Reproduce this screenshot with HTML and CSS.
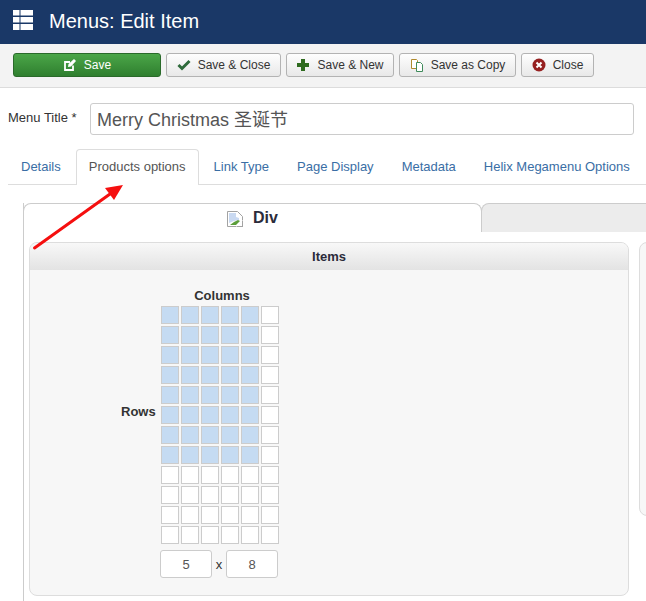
FILE: index.html
```html
<!DOCTYPE html>
<html lang="en">
<head>
<meta charset="utf-8">
<title>Menus: Edit Item</title>
<link rel="stylesheet" href="styles.css">
</head>
<body>
<header class="topbar">
  <svg class="topbar-icon" width="22" height="22" viewBox="0 0 22 22"><path fill="#fff" d="M1 1h6.500v5.500H1zM8.500 1H21v5.500H8.500zM1 8h6.500v5.500H1zM8.500 8H21v5.500H8.500zM1 15h6.500v6H1zM8.500 15H21v6H8.500z"/></svg>
  <h1 class="topbar-title">Menus: Edit Item</h1>
</header>
<div class="toolbar">
  <button class="btn btn-save"><svg class="ico" width="14" height="14" viewBox="0 0 14 14"><path fill="none" stroke="#fff" stroke-width="1.8" d="M10 7.500V12H2V4h5"/><path fill="#fff" d="M5 9l.5-3L11 1l2 2-5 5.500z"/></svg>Save</button>
  <button class="btn btn-sc"><svg class="ico" width="14" height="12" viewBox="0 0 14 12"><path fill="none" stroke="#2f6b3c" stroke-width="3" d="M1.500 6l3.500 3.500L12.500 2"/></svg>Save &amp; Close</button>
  <button class="btn btn-sn"><svg class="ico" width="14" height="14" viewBox="0 0 14 14"><path fill="#2f6b1f" d="M5 1h4v4h4v4H9v4H5V9H1V5h4z"/></svg>Save &amp; New</button>
  <button class="btn btn-sac"><svg class="ico" width="14" height="14" viewBox="0 0 14 14"><path fill="#fff" stroke="#b08a2e" d="M1.500 1.500h5l1 1v8h-6z"/><path fill="#fff" stroke="#3f8a5a" d="M6.500 4.500h4l2 2v7h-6z"/></svg>Save as Copy</button>
  <button class="btn btn-close"><svg class="ico" width="14" height="14" viewBox="0 0 14 14"><circle cx="7" cy="7" r="6.500" fill="#962020"/><path stroke="#fff" stroke-width="2" d="M4.500 4.500l5 5M9.500 4.500l-5 5"/></svg>Close</button>
</div>
<div class="title-row">
  <label class="title-label" for="t">Menu Title *</label>
  <input class="title-input" id="t" value="Merry Christmas 圣诞节">
</div>
<nav class="tabs">
  <a class="tab">Details</a>
  <a class="tab active">Products options</a>
  <a class="tab">Link Type</a>
  <a class="tab">Page Display</a>
  <a class="tab">Metadata</a>
  <a class="tab">Helix Megamenu Options</a>
</nav>
<main class="workspace">
  <div class="sheet-tabs">
    <div class="sheet-tab current">
      <svg class="broken" width="16" height="16" viewBox="0 0 16 16"><path fill="#fff" stroke="#a3a3a3" d="M.5.500h10l5 5v10H.5z"/><path fill="#c9d9f1" d="M2 2h7v4l3 1v2l-5 1-5 2z"/><path fill="#5b9e3a" d="M3 14l4-3 4-2 2 1-4 4z"/><path fill="#fff" d="M9 16l7-7v7z"/><path fill="#a3a3a3" d="M15 10h1v6h-6v-1h5z"/></svg>
      <span>Div</span>
    </div>
    <div class="sheet-tab other"></div>
  </div>
  <div class="panels">
    <section class="panel panel-items">
      <h2 class="panel-head">Items</h2>
      <div class="picker">
        <div class="rows-label">Rows</div>
        <div class="picker-main">
          <div class="cols-label">Columns</div>
          <div class="grid" id="grid">
            <i class="c on"></i><i class="c on"></i><i class="c on"></i><i class="c on"></i><i class="c on"></i><i class="c"></i>
            <i class="c on"></i><i class="c on"></i><i class="c on"></i><i class="c on"></i><i class="c on"></i><i class="c"></i>
            <i class="c on"></i><i class="c on"></i><i class="c on"></i><i class="c on"></i><i class="c on"></i><i class="c"></i>
            <i class="c on"></i><i class="c on"></i><i class="c on"></i><i class="c on"></i><i class="c on"></i><i class="c"></i>
            <i class="c on"></i><i class="c on"></i><i class="c on"></i><i class="c on"></i><i class="c on"></i><i class="c"></i>
            <i class="c on"></i><i class="c on"></i><i class="c on"></i><i class="c on"></i><i class="c on"></i><i class="c"></i>
            <i class="c on"></i><i class="c on"></i><i class="c on"></i><i class="c on"></i><i class="c on"></i><i class="c"></i>
            <i class="c on"></i><i class="c on"></i><i class="c on"></i><i class="c on"></i><i class="c on"></i><i class="c"></i>
            <i class="c"></i><i class="c"></i><i class="c"></i><i class="c"></i><i class="c"></i><i class="c"></i>
            <i class="c"></i><i class="c"></i><i class="c"></i><i class="c"></i><i class="c"></i><i class="c"></i>
            <i class="c"></i><i class="c"></i><i class="c"></i><i class="c"></i><i class="c"></i><i class="c"></i>
            <i class="c"></i><i class="c"></i><i class="c"></i><i class="c"></i><i class="c"></i><i class="c"></i>
          </div>
          <div class="size">
            <input class="size-input" value="5">
            <span class="size-x">x</span>
            <input class="size-input" value="8">
          </div>
        </div>
      </div>
    </section>
    <section class="panel panel-other"></section>
  </div>
</main>
<svg class="arrow" width="100" height="72" viewBox="0 0 100 72"><path fill="none" stroke="#f50f0f" stroke-width="3" stroke-linecap="round" d="M2.500 65L78 11"/><path fill="#f50f0f" d="M91 2L73 5l9 12z"/></svg>
</body>
</html>
```
FILE: styles.css
```css
* { box-sizing: border-box; }
html, body { margin: 0; height: 601px; overflow: hidden; background: #fff; }
body { position: relative; width: 646px; font-family: "Liberation Sans", "Noto Sans CJK SC", sans-serif; font-size: 13px; color: #333; }

.topbar { height: 44px; background: #1a3867; display: flex; align-items: center; padding-left: 12px; }
.topbar-icon { flex: none; margin-top: -5px; }
.topbar-title { margin: 1px 0 0 15px; font-size: 20px; font-weight: 400; color: #fff; line-height: 40px; align-self: flex-start; }

.toolbar { height: 44px; background: #f3f3f3; border-bottom: 1px solid #dcdcdc; padding: 9px 0 0 13px; display: flex; gap: 5px; align-items: flex-start; }
.btn { height: 24px; padding: 0; display: flex; align-items: center; justify-content: center; gap: 7px; border: 1px solid #b3b3b3; border-radius: 3px; background: linear-gradient(#fefefe, #e8e8e8); color: #333; font: 12px "Liberation Sans", sans-serif; }
.btn-save { width: 148px; background: linear-gradient(#4ba648, #2f7f2f); border-color: #2a6a2a; color: #fff; }
.btn-sc { width: 115px; }
.btn-sn { width: 108px; }
.btn-sac { width: 117px; }
.btn-close { width: 73px; }
.ico { flex: none; }

.title-row { display: flex; align-items: flex-start; padding: 15px 12px 0 8px; }
.title-label { width: 82px; flex: none; line-height: 30px; font-size: 13px; color: #333; }
.title-input { flex: 1; min-width: 0; height: 32px; border: 1px solid #ccc; border-radius: 3px; padding: 0 6px 2px; font: 18px "Liberation Sans", "Noto Sans CJK SC", sans-serif; color: #555; background: #fff; }

.tabs { display: flex; gap: 2px; height: 36px; margin: 14px 0 0 8px; border-bottom: 1px solid #ddd; }
.tab { height: 36px; padding: 0 12px; line-height: 34px; font-size: 13px; color: #3a6ea5; white-space: nowrap; border: 1px solid transparent; border-bottom: 0; }
.tab.active { background: #fff; color: #555; border-color: #ddd; border-radius: 4px 4px 0 0; }

.workspace { margin: 18px 0 0 23px; width: 700px; height: 420px; border-left: 1px solid #ccc; }
.sheet-tabs { display: flex; height: 29px; margin-left: -1px; }
.sheet-tab { flex: none; border: 1px solid #ccc; border-bottom: 0; border-radius: 8px 8px 0 0; }
.sheet-tab.current { width: 459px; background: #fff; display: flex; align-items: center; justify-content: center; gap: 10px; font-size: 16px; font-weight: 700; color: #2b2b3a; padding-bottom: 1px; }
.sheet-tab.other { width: 300px; background: #ececec; margin-left: -1px; }
.broken { flex: none; margin-top: 2px; }

.panels { display: flex; gap: 10px; align-items: flex-start; padding: 10px 0 0 5px; }
.panel { flex: none; border: 1px solid #ddd; border-radius: 8px; background: #f7f7f7; overflow: hidden; }
.panel-items { width: 600px; height: 354px; }
.panel-other { width: 300px; height: 274px; }
.panel-head { margin: 0; height: 27px; background: linear-gradient(#f8f8f8, #e3e3e3); text-align: center; font-size: 13px; font-weight: 700; line-height: 28px; color: #2b2b3a; }

.picker { display: flex; padding: 17px 0 0 90px; }
.rows-label { width: 40px; flex: none; font-weight: 700; font-size: 13px; color: #333; padding: 117px 0 0 1px; }
.picker-main { width: 120px; display: flex; flex-direction: column; }
.cols-label { text-align: center; font-weight: 700; font-size: 13px; color: #333; line-height: 16px; margin-top: 1px; padding-left: 4px; }
.grid { display: grid; grid-template-columns: repeat(6, 18px); grid-auto-rows: 18px; gap: 2px; margin: 2px 0 0 1px; }
.c { display: block; border: 1px solid #ccc; background: #fff; }
.c.on { background: #c5dbf2; }
.size { display: flex; align-items: center; margin-top: 6px; }
.size-input { width: 52px; height: 28px; border: 1px solid #ccc; border-radius: 3px; background: #fff; text-align: center; font: 13px "Liberation Sans", sans-serif; color: #555; padding: 0; }
.size-x { width: 14px; text-align: center; font-size: 13px; }

.arrow { position: absolute; left: 32px; top: 183px; }
```
